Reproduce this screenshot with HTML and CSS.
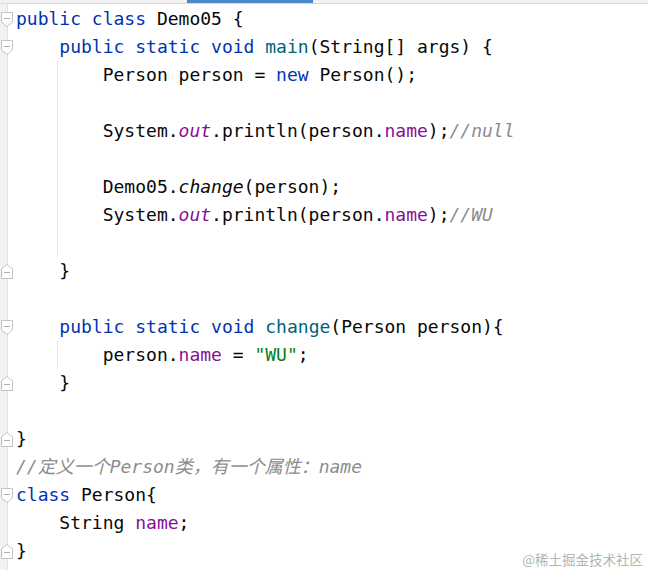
FILE: index.html
```html
<!DOCTYPE html>
<html>
<head>
<meta charset="utf-8">
<link rel="stylesheet" href="styles.css">
</head>
<body>
<div class="page">
  <div class="topbar"><div class="tab-indicator"></div></div>
  <div class="editor">
    <div class="gutter"></div>
    <div class="code">
      <div class="line"><span class="fold start"></span><span class="kw">public class</span> Demo05 {</div>
      <div class="line"><span class="fold start"></span>    <span class="kw">public static void</span> <span class="fn">main</span>(String[] args) {</div>
      <div class="line g">        Person person = <span class="kw">new</span> Person();</div>
      <div class="line g"> </div>
      <div class="line g">        System.<span class="sf">out</span>.println(person.<span class="fd">name</span>);<span class="cm">//null</span></div>
      <div class="line g"> </div>
      <div class="line g">        Demo05.<span class="sm">change</span>(person);</div>
      <div class="line g">        System.<span class="sf">out</span>.println(person.<span class="fd">name</span>);<span class="cm">//WU</span></div>
      <div class="line g"> </div>
      <div class="line"><span class="fold end"></span>    }</div>
      <div class="line"> </div>
      <div class="line"><span class="fold start"></span>    <span class="kw">public static void</span> <span class="fn">change</span>(Person person){</div>
      <div class="line g">        person.<span class="fd">name</span> = <span class="str">"WU"</span>;</div>
      <div class="line"><span class="fold end"></span>    }</div>
      <div class="line"> </div>
      <div class="line"><span class="fold end"></span>}</div>
      <div class="line"><span class="cm">//定义一个Person类，有一个属性：name</span></div>
      <div class="line"><span class="fold start"></span><span class="kw">class</span> Person{</div>
      <div class="line">    String <span class="fd">name</span>;</div>
      <div class="line"><span class="fold end"></span>}</div>
    </div>
  </div>
  <div class="watermark">@稀土掘金技术社区</div>
</div>
</body>
</html>
```

FILE: styles.css
```css
html, body {
  margin: 0;
  padding: 0;
  background: #ffffff;
}
.page {
  position: relative;
  width: 648px;
  height: 570px;
  overflow: hidden;
  background: #ffffff;
}
.topbar {
  height: 3px;
  background: #f2f2f2;
  border-bottom: 1px solid #d8d8d8;
  display: flex;
}
.tab-indicator {
  margin-left: 187px;
  width: 126px;
  height: 3px;
  background: #4a88c7;
}
.editor {
  display: flex;
  height: 566px;
}
.gutter {
  width: 7px;
  background: #f2f2f2;
  border-right: 1px solid #e2e2e2;
  flex: none;
}
.code {
  flex: 1;
  padding-left: 8px;
  padding-top: 1px;
  font-family: "DejaVu Sans Mono", "Noto Sans CJK SC", monospace;
  font-size: 18px;
  color: #080808;
}
.line {
  position: relative;
  height: 28px;
  line-height: 28px;
  white-space: pre;
}
.line.g::before {
  content: "";
  position: absolute;
  left: 41px;
  top: 0;
  bottom: 0;
  width: 1px;
  background: #e6e6e6;
}
.fold {
  position: absolute;
  left: -15px;
  top: 7px;
  width: 12px;
  height: 15px;
  background-repeat: no-repeat;
}
.fold.start {
  background-image: url("data:image/svg+xml;utf8,<svg xmlns='http://www.w3.org/2000/svg' width='12' height='15'><path d='M0.5 0.5H11.5V10L6 14.5L0.5 10Z' fill='white' stroke='%23c2c2c2'/><path d='M3 6.5H9' stroke='%23b0b0b0'/></svg>");
}
.fold.end {
  background-image: url("data:image/svg+xml;utf8,<svg xmlns='http://www.w3.org/2000/svg' width='12' height='15'><path d='M0.5 14.5H11.5V5L6 0.5L0.5 5Z' fill='white' stroke='%23c2c2c2'/><path d='M3 8.5H9' stroke='%23b0b0b0'/></svg>");
}
.kw { color: #0033b3; }
.fn { color: #00627a; }
.fd { color: #871094; }
.sf { color: #871094; font-style: italic; }
.sm { font-style: italic; }
.str { color: #067d17; }
.cm { color: #8c8c8c; font-style: italic; }
.watermark {
  position: absolute;
  right: 5px;
  bottom: 3px;
  font-family: "Noto Sans CJK SC", sans-serif;
  font-size: 13.5px;
  line-height: 16px;
  color: #b4b4b4;
}
```
